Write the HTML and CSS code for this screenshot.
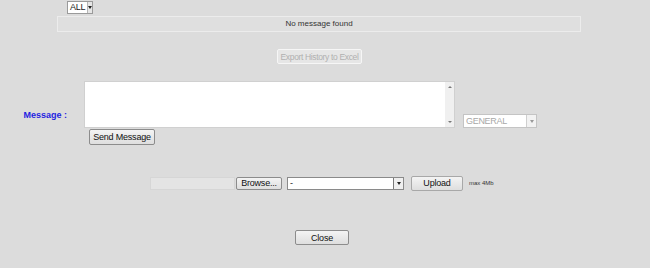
FILE: index.html
```html
<!DOCTYPE html>
<html lang="en">
<head>
  <meta charset="UTF-8">
  <title>Messages</title>
  <link rel="stylesheet" href="styles.css">
</head>
<body>
  <div class="page">
    <div class="filter-row">
      <span class="combo combo-all">
        <span class="combo-value">ALL</span>
        <span class="combo-arrow"><span class="tri"></span></span>
      </span>
    </div>

    <div class="msg-bar">No message found</div>

    <div class="export-row">
      <button class="btn btn-disabled" disabled>Export History to Excel</button>
    </div>

    <div class="compose-row">
      <label class="msg-label" for="msg">Message :</label>
      <div class="textarea-box">
        <textarea id="msg"></textarea>
        <div class="scroll">
          <span class="tri-up"></span>
          <span class="tri-down"></span>
        </div>
      </div>
      <span class="combo combo-general">
        <span class="combo-value">GENERAL</span>
        <span class="combo-arrow"><span class="tri"></span></span>
      </span>
    </div>

    <div class="send-row">
      <button class="btn btn-send">Send Message</button>
    </div>

    <div class="upload-row">
      <span class="file-field"></span>
      <button class="btn btn-browse">Browse...</button>
      <span class="combo combo-type">
        <span class="combo-value">-</span>
        <span class="combo-arrow dark"><span class="tri"></span></span>
      </span>
      <button class="btn btn-upload">Upload</button>
      <span class="max-note">max 4Mb</span>
    </div>

    <div class="close-row">
      <button class="btn btn-close">Close</button>
    </div>
  </div>
</body>
</html>
```

FILE: styles.css
```css
body {
  margin: 0;
  background: #dcdcdc;
  font-family: 'Liberation Sans', Arial, sans-serif;
  font-size: 9px;
  color: #222;
}
.page { width: 650px; height: 268px; }

/* select look-alikes */
.combo {
  display: inline-flex;
  align-items: stretch;
  background: #fff;
  border: 1px solid #9a9a9a;
  box-sizing: border-box;
  height: 13px;
}
.combo-value {
  flex: 1;
  padding: 0 2px;
  line-height: 11px;
  font-size: 9px;
  letter-spacing: -0.3px;
  white-space: nowrap;
}
.combo-arrow {
  width: 9px;
  background: #e6e6e6;
  border-left: 1px solid #b5b5b5;
  display: flex;
  align-items: center;
  justify-content: center;
}
.combo-arrow.dark { background: #efefef; border-left-color: #7a7a7a; }
.tri {
  width: 0; height: 0;
  border-left: 2px solid transparent;
  border-right: 2px solid transparent;
  border-top: 3px solid #222;
}

.filter-row { padding: 1px 0 0 67px; height: 14px; }
.combo-all { width: 26px; height: 13px; }

.msg-bar {
  margin: 1px 69px 0 57px;
  height: 16px;
  box-sizing: border-box;
  border: 1px solid #ececec;
  background: #dfdfdf;
  text-align: center;
  line-height: 14px;
  font-size: 8px;
  color: #333;
}

.btn {
  font-family: 'Liberation Sans', Arial, sans-serif;
  font-size: 9px;
  letter-spacing: -0.2px;
  white-space: nowrap;
  color: #111;
  background: linear-gradient(#f4f4f4, #dedede);
  border: 1px solid #8c8c8c;
  border-radius: 2px;
  padding: 0;
  box-sizing: border-box;
  height: 16px;
}
.btn-disabled {
  background: #e6e6e6;
  border-color: #f6f6f6;
  color: #b0b0b0;
  font-size: 8.5px;
  letter-spacing: -0.35px;
  width: 85px;
  height: 15px;
}
.export-row { padding: 17px 0 0 277px; height: 16px; }

.compose-row {
  display: flex;
  align-items: flex-end;
  margin-top: 16px;
  height: 47px;
}
.msg-label {
  width: 67px;
  text-align: right;
  color: #1f1fe0;
  font-weight: bold;
  font-size: 9px;
  margin-bottom: 8px;
  margin-right: 17px;
}
.textarea-box {
  display: flex;
  width: 371px;
  height: 47px;
  background: #fff;
  border: 1px solid #d0d0d0;
  box-sizing: border-box;
}
.textarea-box textarea {
  flex: 1;
  border: none;
  resize: none;
  margin: 0;
  padding: 0;
  outline: none;
}
.scroll {
  width: 9px;
  background: #f0f0f0;
  display: flex;
  flex-direction: column;
  justify-content: space-between;
  align-items: center;
  padding: 4px 0;
}
.tri-up, .tri-down {
  width: 0; height: 0;
  border-left: 2px solid transparent;
  border-right: 2px solid transparent;
}
.tri-up { border-bottom: 2px solid #777; }
.tri-down { border-top: 2px solid #777; }
.combo-general {
  width: 74px;
  height: 14px;
  margin-left: 8px;
  border-color: #c4c4c4;
}
.combo-general .combo-value { color: #a8a8a8; line-height: 12px; }
.combo-general .combo-arrow { background: #f2f2f2; border-left-color: #cfcfcf; }
.combo-general .tri { border-top-color: #999; }

.send-row { padding: 1px 0 0 89px; }
.btn-send { width: 66px; height: 16px; }

.upload-row {
  display: flex;
  align-items: center;
  padding-left: 150px;
  margin-top: 30px;
  height: 16px;
}
.file-field {
  width: 85px;
  height: 13px;
  background: #e4e4e4;
  border: 1px solid #d6d6d6;
  box-sizing: border-box;
}
.btn-browse { width: 46px; height: 13px; margin-left: 1px; line-height: 11px; }
.combo-type { width: 117px; margin-left: 5px; border-color: #8a8a8a; }
.btn-upload { width: 52px; height: 15px; margin-left: 7px; border-color: #a8a8a8; }
.max-note { font-size: 6px; margin-left: 6px; color: #333; }

.close-row { padding: 39px 0 0 295px; }
.btn-close { width: 54px; height: 15px; }
```
